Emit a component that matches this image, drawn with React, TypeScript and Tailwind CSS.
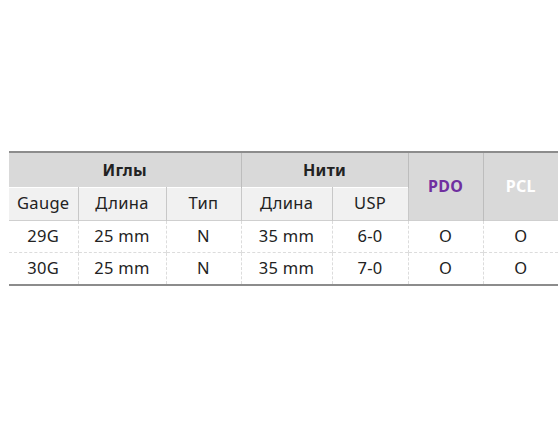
const font = { fontFamily: '"Noto Sans", "Open Sans", sans-serif' }

const rows = [
  ["29G", "25 mm", "N", "35 mm", "6-0", "O", "O"],
  ["30G", "25 mm", "N", "35 mm", "7-0", "O", "O"],
]

const widths = ["w-[69px]", "w-[88px]", "w-[75px]", "w-[91px]", "w-[76px]", "w-[75px]", "w-[75px]"]

export default function App() {
  return (
    <div className="w-[560px] h-[430px] bg-white pt-[151px] pl-[9px]" style={font}>
      <div className="w-[549px] border-b-2 border-[#8c8c8c]">
        <table className="w-full table-fixed border-collapse text-[#222] text-[16.5px] tracking-[0.3px]">
          <colgroup>
            {widths.map((w, i) => (
              <col key={i} className={w} />
            ))}
          </colgroup>
          <thead>
            <tr className="h-[35px] bg-[#d9d9d9] border-t-2 border-[#8c8c8c]">
              <th colSpan={3} className="font-bold text-[16px] border-r border-r-[#bdbdbd]">Иглы</th>
              <th colSpan={2} className="font-bold text-[16px] border-r border-r-[#bdbdbd]">Нити</th>
              <th rowSpan={2} className="font-bold text-[16px] text-[#7030a0] border-r border-r-[#bdbdbd]">PDO</th>
              <th rowSpan={2} className="font-bold text-[16px] text-white">PCL</th>
            </tr>
            <tr className="h-[33px] bg-[#f1f1f1] border-t border-t-white">
              {["Gauge", "Длина", "Тип", "Длина", "USP"].map((t, i) => (
                <th key={i} className="font-normal border-r border-r-[#c8c8c8]">{t}</th>
              ))}
            </tr>
          </thead>
          <tbody>
            {rows.map((r, ri) => (
              <tr
                key={ri}
                className={
                  ri === 0
                    ? "h-[32px] border-t border-t-[#cfcfcf]"
                    : "h-[32px] border-t border-dashed border-t-[#dcdcdc]"
                }
              >
                {r.map((c, ci) => (
                  <td
                    key={ci}
                    className={
                      ci < 6
                        ? "text-center border-r border-dashed border-r-[#dcdcdc]"
                        : "text-center"
                    }
                  >
                    {c}
                  </td>
                ))}
              </tr>
            ))}
          </tbody>
        </table>
      </div>
    </div>
  )
}
